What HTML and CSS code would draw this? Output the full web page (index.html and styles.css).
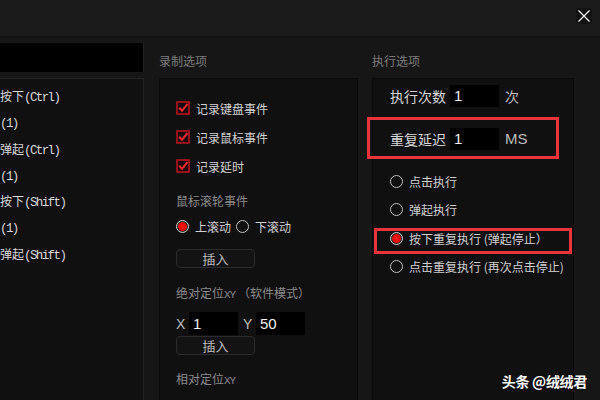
FILE: index.html
```html
<!DOCTYPE html>
<html lang="zh-CN">
<head>
  <meta charset="UTF-8">
  <meta name="viewport" content="width=device-width, initial-scale=1.0">
  <title>宏录制 - 设置</title>
  <link rel="stylesheet" href="styles.css">
</head>
<body>
  <div class="window">
    <!-- Title bar -->
    <div class="titlebar">
      <span class="close">
        <svg width="14" height="14" viewBox="0 0 14 14"><path d="M1.5 1.5 L12.5 12.5 M12.5 1.5 L1.5 12.5" stroke="#f2f2f2" stroke-width="1.3" fill="none"/></svg>
      </span>
    </div>

    <div class="main">
      <!-- Left: recorded list -->
      <div class="col col-left">
        <div class="col-head"><div class="name-input"></div></div>
        <div class="box list-box">
          <div class="list-item">按下<span class="mono">(Ctrl)</span></div>
          <div class="list-item"><span class="mono">(1)</span></div>
          <div class="list-item">弹起<span class="mono">(Ctrl)</span></div>
          <div class="list-item"><span class="mono">(1)</span></div>
          <div class="list-item">按下<span class="mono">(Shift)</span></div>
          <div class="list-item"><span class="mono">(1)</span></div>
          <div class="list-item">弹起<span class="mono">(Shift)</span></div>
        </div>
      </div>

      <!-- Middle: record options -->
      <div class="col col-mid">
        <div class="col-head"><div class="section-title">录制选项</div></div>
        <div class="box mid-box">
          <div class="check-row">
            <svg class="check" width="14" height="14" viewBox="0 0 14 14"><rect x="1" y="1" width="12" height="12" fill="#1a0a0b" stroke="#b3141e" stroke-width="1.6"/><path d="M3.2 6.8 L6 9.8 L11.5 3" stroke="#ee2a30" stroke-width="2" fill="none"/></svg>
            记录键盘事件
          </div>
          <div class="check-row">
            <svg class="check" width="14" height="14" viewBox="0 0 14 14"><rect x="1" y="1" width="12" height="12" fill="#1a0a0b" stroke="#b3141e" stroke-width="1.6"/><path d="M3.2 6.8 L6 9.8 L11.5 3" stroke="#ee2a30" stroke-width="2" fill="none"/></svg>
            记录鼠标事件
          </div>
          <div class="check-row">
            <svg class="check" width="14" height="14" viewBox="0 0 14 14"><rect x="1" y="1" width="12" height="12" fill="#1a0a0b" stroke="#b3141e" stroke-width="1.6"/><path d="M3.2 6.8 L6 9.8 L11.5 3" stroke="#ee2a30" stroke-width="2" fill="none"/></svg>
            记录延时
          </div>

          <div class="sub-title wheel-title">鼠标滚轮事件</div>
          <div class="radio-row inline">
            <span class="radio checked"></span>上滚动
            <span class="radio"></span>下滚动
          </div>
          <button class="btn btn-insert">插入</button>

          <div class="sub-title abs-title">绝对定位<span class="mono-s">XY</span> （软件模式）</div>
          <div class="xy-row">
            <span class="xy-label">X</span><span class="field small">1</span>
            <span class="xy-label y">Y</span><span class="field small">50</span>
          </div>
          <button class="btn btn-insert2">插入</button>

          <div class="sub-title rel-title">相对定位<span class="mono-s">XY</span></div>
        </div>
      </div>

      <!-- Right: run options -->
      <div class="col col-right">
        <div class="col-head"><div class="section-title">执行选项</div></div>
        <div class="box run-box">
          <div class="field-row">
            <span class="field-label">执行次数</span><span class="field">1</span><span class="unit">次</span>
          </div>
          <div class="field-row second">
            <span class="field-label">重复延迟</span><span class="field">1</span><span class="unit">MS</span>
          </div>
          <div class="run-radios">
            <div class="radio-row"><span class="radio"></span>点击执行</div>
            <div class="radio-row"><span class="radio"></span>弹起执行</div>
            <div class="radio-row"><span class="radio checked"></span>按下重复执行 (弹起停止）</div>
            <div class="radio-row"><span class="radio"></span>点击重复执行 (再次点击停止)</div>
          </div>
        </div>
      </div>
    </div>

    <!-- annotation marks over the screenshot -->
    <div class="mark mark-delay"></div>
    <div class="mark mark-hold"></div>

    <div class="watermark">头条 @绒绒君</div>
  </div>
</body>
</html>
```

FILE: styles.css
```css
body {
  margin: 0;
  padding: 0;
  background-color: #161616;
  font-family: "Noto Sans CJK SC", "Noto Sans", sans-serif;
  color: #cfcfcf;
}

.window {
  position: relative;
  width: 600px;
  height: 400px;
  overflow: hidden;
  background: #161616;
}

.titlebar {
  height: 36px;
  background: #1b1b1b;
  border-bottom: 2px solid #111;
  display: flex;
  justify-content: flex-end;
  align-items: flex-start;
}

.close {
  display: flex;
  align-items: center;
  justify-content: center;
  width: 16px;
  height: 16px;
  margin: 8px 8px 0 0;
  background: #111;
}

.main {
  display: flex;
  height: 362px;
}

.col {
  display: flex;
  flex-direction: column;
}

.col-left {
  width: 144px;
  margin-right: 15px;
}

.col-mid {
  width: 199px;
  margin-right: 14px;
}

.col-right {
  width: 202px;
}

.col-head {
  height: 40px;
  box-sizing: border-box;
}

.col-left .col-head {
  padding-top: 5px;
}

.name-input {
  height: 29px;
  background: #000;
  border-right: 1px solid #222;
}

.section-title {
  padding-top: 15px;
  font-size: 12px;
  line-height: 16px;
  color: #7c7c7c;
}

.box {
  flex: 1;
  background: #101010;
  border: 1px solid #0a0a0a;
  border-bottom: none;
}

/* left list */
.list-box {
  border-left: none;
  border-color: #232323;
  padding-top: 7px;
}

.list-item {
  height: 26.3px;
  line-height: 20px;
  font-size: 12px;
  color: #d6d6d6;
  white-space: nowrap;
}

.mono {
  font-family: "Liberation Mono", "DejaVu Sans Mono", monospace;
  font-size: 12.5px;
  letter-spacing: -1.6px;
  color: #d6d6d6;
}

.mono-s {
  font-family: "Liberation Mono", monospace;
  font-size: 11px;
  letter-spacing: -1px;
}

/* middle box */
.mid-box {
  padding: 19px 0 0 16px;
}

.check-row {
  display: flex;
  align-items: center;
  height: 20px;
  margin-bottom: 9px;
  font-size: 12px;
  color: #d2d2d2;
}

.check {
  margin-right: 6px;
}

.sub-title {
  font-size: 12px;
  line-height: 16px;
  color: #8a8a8a;
  white-space: nowrap;
}

.wheel-title {
  margin-top: 17px;
}

.radio-row {
  display: flex;
  align-items: center;
  height: 20px;
  font-size: 12px;
  color: #cfcfcf;
  white-space: nowrap;
}

.radio-row.inline {
  margin-top: 7px;
}

.radio {
  width: 11px;
  height: 11px;
  border: 1.4px solid #bdbdbd;
  border-radius: 50%;
  margin-right: 6px;
  box-sizing: content-box;
  flex-shrink: 0;
}

.radio-row.inline .radio:nth-of-type(2) {
  margin-left: 5px;
}

.radio.checked {
  background: radial-gradient(circle, #ff1a1a 0, #e00000 4.2px, #2a2a2a 4.6px, #2a2a2a 100%);
  border-color: #d0d0d0;
}

.btn {
  display: block;
  width: 79px;
  height: 19px;
  padding: 0;
  background: #131313;
  border: 1px solid #2c2c2c;
  border-radius: 4px;
  color: #bdbdbd;
  font-family: inherit;
  font-size: 13px;
  line-height: 16px;
}

.btn-insert {
  margin-top: 13px;
}

.abs-title {
  margin-top: 17px;
}

.xy-row {
  display: flex;
  align-items: center;
  margin-top: 9px;
  height: 23px;
}

.xy-label {
  width: 13px;
  font-family: "Liberation Sans", sans-serif;
  font-size: 14px;
  color: #bdbdbd;
}

.xy-label.y {
  margin-left: 5px;
}

.field {
  display: inline-block;
  width: 45px;
  height: 22px;
  padding-left: 4px;
  background: #000;
  color: #f0f0f0;
  font-family: "Liberation Sans", sans-serif;
  font-size: 15px;
  line-height: 22px;
}

.field.small {
  height: 23px;
  line-height: 23px;
}

.btn-insert2 {
  margin-top: 1px;
}

.rel-title {
  margin-top: 16px;
}

/* right box */
.run-box {
  padding: 6px 0 0 17px;
}

.field-row {
  display: flex;
  align-items: center;
  height: 22px;
}

.field-row.second {
  margin-top: 20px;
  height: 23px;
}

.field-label {
  width: 60px;
  font-size: 14px;
  color: #d6d6d6;
}

.unit {
  margin-left: 6px;
  font-size: 14px;
  color: #bdbdbd;
}

.field-row.second .unit {
  font-family: "Liberation Sans", sans-serif;
  font-size: 15px;
}

.run-radios {
  margin-top: 21px;
}

.run-radios .radio-row {
  height: 20px;
  margin-bottom: 8.5px;
}

/* red annotation boxes drawn over the screenshot */
.mark {
  position: absolute;
  border: 3px solid #e8343c;
  box-sizing: border-box;
}

.mark-delay {
  left: 367px;
  top: 117px;
  width: 192px;
  height: 42px;
}

.mark-hold {
  left: 374px;
  top: 228px;
  width: 198px;
  height: 26px;
}

.watermark {
  position: absolute;
  right: 13px;
  bottom: 9px;
  font-size: 14px;
  font-weight: bold;
  letter-spacing: -0.3px;
  color: #fff;
  text-shadow: 0 0 2px rgba(0, 0, 0, 0.6);
}
```
